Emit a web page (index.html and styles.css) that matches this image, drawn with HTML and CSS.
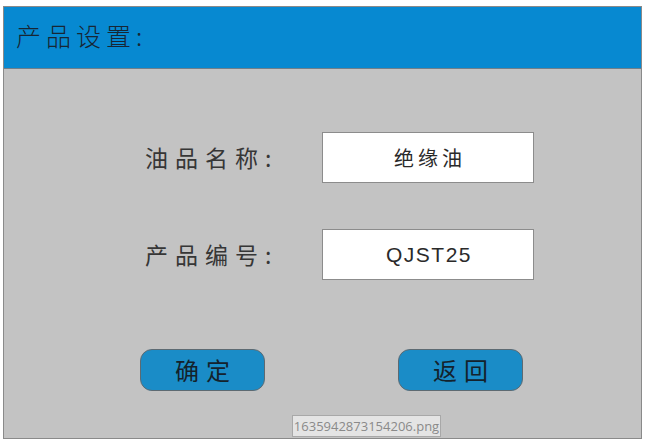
FILE: index.html
```html
<!DOCTYPE html>
<html lang="zh-CN">
<head>
<meta charset="utf-8">
<title>产品设置</title>
<link rel="stylesheet" href="styles.css">
</head>
<body>
<div class="frame">
  <div class="header"><span class="title">产品设置:</span></div>
  <div class="content">
    <div class="form">
      <div class="label">油品名称:</div>
      <div class="field cjk">绝缘油</div>
      <div class="label">产品编号:</div>
      <div class="field latin">QJST25</div>
    </div>
    <div class="actions">
      <div class="btn">确定</div>
      <div class="btn">返回</div>
    </div>
  </div>
  <div class="tooltip">1635942873154206.png</div>
</div>
</body>
</html>
```
FILE: styles.css
```css
html, body {
  margin: 0;
  padding: 0;
  background: #ffffff;
}
body {
  font-family: "Noto Sans CJK SC", "Noto Sans", sans-serif;
}
.frame {
  position: relative;
  margin: 6px 0 0 3px;
  width: 637px;
  height: 431px;
  border: 1px solid #8a8a8a;
  background: #c3c3c3;
  display: flex;
  flex-direction: column;
}
.header {
  background: #0789d1;
  border-bottom: 1px solid #6f7f8a;
  display: flex;
  align-items: center;
  padding-left: 12px;
  box-sizing: border-box;
  height: 62px;
}
.title {
  font-size: 25px;
  font-weight: 300;
  letter-spacing: 5px;
  color: #172634;
  line-height: 1;
  margin-top: -4px;
}
.content {
  flex: 1;
  padding-top: 63px;
  display: flex;
  flex-direction: column;
}
.form {
  display: grid;
  grid-template-columns: 177px 212px;
  grid-auto-rows: 51px;
  row-gap: 46px;
  margin-left: 141px;
}
.label {
  display: flex;
  align-items: center;
  font-size: 23px;
  letter-spacing: 7px;
  color: #363636;
  line-height: 1;
}
.field {
  background: #ffffff;
  border: 1px solid #8c8c8c;
  box-sizing: border-box;
  display: flex;
  align-items: center;
  justify-content: center;
  color: #2a2a2a;
  line-height: 1;
}
.field.cjk {
  font-size: 20px;
  letter-spacing: 4px;
  padding-left: 4px;
}
.field.latin {
  font-family: "Liberation Sans", Arial, sans-serif;
  font-size: 21px;
  letter-spacing: 1.5px;
  padding-left: 2px;
}
.actions {
  display: flex;
  gap: 133px;
  margin-top: 69px;
  margin-left: 136px;
}
.btn {
  width: 125px;
  height: 42px;
  box-sizing: border-box;
  background: #1a8cc7;
  border: 1px solid #5d6a72;
  border-radius: 12px;
  display: flex;
  align-items: center;
  justify-content: center;
  font-size: 24px;
  letter-spacing: 7px;
  padding-left: 7px;
  color: #14222c;
  line-height: 1;
}
.tooltip {
  position: absolute;
  left: 288px;
  top: 408px;
  width: 149px;
  height: 22px;
  box-sizing: border-box;
  background: #e4e4e4;
  border: 1px solid #a8a8a8;
  font-family: "Open Sans", "Noto Sans", sans-serif;
  font-size: 13px;
  color: #8a8a8a;
  display: flex;
  align-items: center;
  justify-content: center;
  line-height: 1;
}
```
